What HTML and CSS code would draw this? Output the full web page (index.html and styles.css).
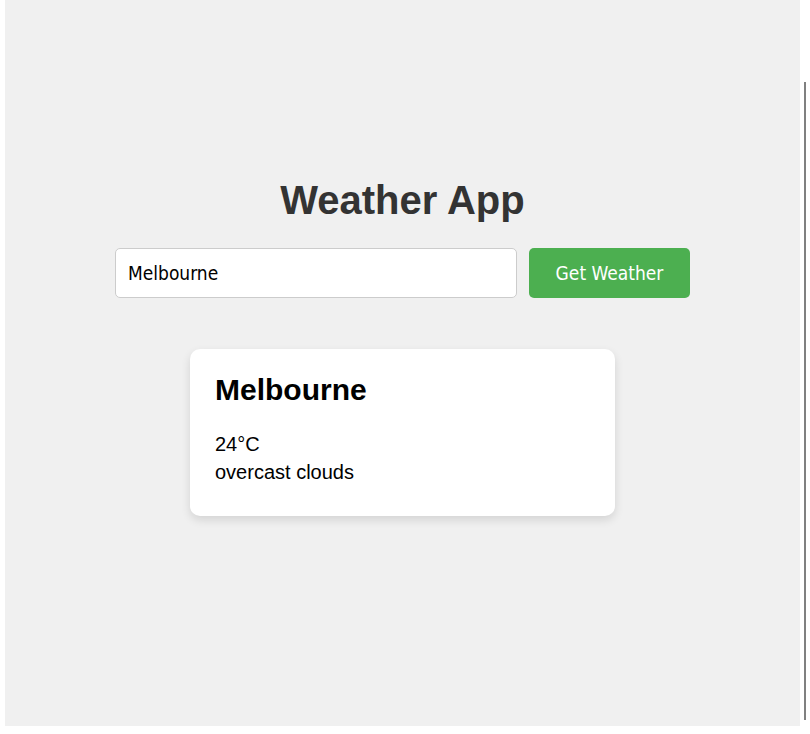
FILE: index.html
```html
<!DOCTYPE html>
<html>
<head>
<meta charset="utf-8">
<link rel="stylesheet" href="styles.css">
</head>
<body>
<div class="page">
  <main class="panel">
    <h1 class="title">Weather App</h1>
    <div class="search">
      <input class="city-input" type="text" value="Melbourne">
      <button class="get-btn">Get Weather</button>
    </div>
    <section class="card">
      <h2 class="city">Melbourne</h2>
      <p class="line">24°C</p>
      <p class="line">overcast clouds</p>
    </section>
  </main>
  <div class="rail"></div>
</div>
</body>
</html>
```
FILE: styles.css
```css
html, body {
  margin: 0;
  padding: 0;
  background: #ffffff;
}
.page {
  display: flex;
  align-items: flex-start;
  padding-left: 5px;
}
.panel {
  width: 795px;
  height: 726px;
  box-sizing: border-box;
  background: #f0f0f0;
  display: flex;
  flex-direction: column;
  align-items: center;
  padding-top: 177px;
  font-family: "Liberation Sans", Arial, sans-serif;
}
.title {
  margin: 0;
  font-size: 40px;
  font-weight: bold;
  color: #333333;
  line-height: 46px;
}
.search {
  display: flex;
  gap: 12px;
  margin-top: 25px;
}
.city-input {
  width: 402px;
  height: 50px;
  box-sizing: border-box;
  border: 1px solid #cccccc;
  border-radius: 5px;
  padding: 0 12px;
  font-family: "DejaVu Sans Condensed", "DejaVu Sans", sans-serif;
  font-stretch: condensed;
  font-size: 19px;
  color: #000;
  background: #fff;
  outline: none;
}
.get-btn {
  width: 161px;
  height: 50px;
  box-sizing: border-box;
  border: none;
  border-radius: 5px;
  background: #4caf50;
  color: #ffffff;
  font-family: "DejaVu Sans Condensed", "DejaVu Sans", sans-serif;
  font-stretch: condensed;
  font-size: 19px;
  padding: 0;
}
.card {
  margin-top: 51px;
  width: 425px;
  box-sizing: border-box;
  background: #ffffff;
  border-radius: 10px;
  padding: 24px 25px 27px;
  box-shadow: 0 4px 10px rgba(0, 0, 0, 0.12);
}
.city {
  margin: 0 0 26px;
  font-size: 30px;
  font-weight: bold;
  color: #000;
  line-height: 34px;
}
.line {
  margin: 0 0 5px;
  font-size: 20px;
  line-height: 23px;
  color: #000;
}
.rail {
  width: 2px;
  height: 638px;
  margin-top: 82px;
  margin-left: 4px;
  background: #808080;
}
```
